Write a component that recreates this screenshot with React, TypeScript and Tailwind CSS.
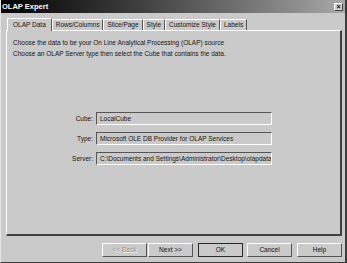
import React from 'react';

const tabs = ['OLAP Data', 'Rows/Columns', 'Slice/Page', 'Style', 'Customize Style', 'Labels'];

const fields = [
  { label: 'Cube:', value: 'LocalCube' },
  { label: 'Type:', value: 'Microsoft OLE DB Provider for OLAP Services' },
  { label: 'Server:', value: 'C:\\Documents and Settings\\Administrator\\Desktop\\olapdata' },
];

const Btn: React.FC<{ label: string; disabled?: boolean; primary?: boolean; className?: string }> = ({
  label,
  disabled,
  primary,
  className,
}) => (
  <div
    className={
      'h-[14px] w-[45px] flex items-center justify-center border ' +
      (primary ? 'border-[#2a2a2a] ' : 'border-t-white border-l-white border-r-[#555] border-b-[#555] ') +
      (className || '')
    }
  >
    <span className={disabled ? 'text-[#8e8e8e] [text-shadow:1px_1px_0_#fff]' : 'text-[#111]'}>{label}</span>
  </div>
);

const App: React.FC = () => {
  return (
    <div className="w-[347px] h-[263px] bg-[#cacaca] flex flex-col border-l border-l-[#e6e6e6] border-r-2 border-r-[#3a3a3a] border-b border-b-[#3a3a3a] font-['Liberation_Sans',Arial,sans-serif] text-[6.5px] text-[#151515] overflow-hidden">
      {/* title bar */}
      <div className="h-[13px] flex items-center justify-between bg-gradient-to-r from-[#050505] via-[#505050] to-[#a8a8a8] pl-[1px] pr-[2px]">
        <span className="text-white font-bold text-[7.5px] leading-none">OLAP Expert</span>
        <div className="w-[9px] h-[8px] bg-[#cfcfcf] border border-t-white border-l-white border-r-[#444] border-b-[#444] flex items-center justify-center text-[7px] font-bold leading-none text-black">
          ×
        </div>
      </div>

      <div className="flex flex-col pl-[5px] pr-[3px] pt-[4px]">
        {/* tabs */}
        <div className="flex items-end h-[13px] pl-[1px]">
          {tabs.map((t, i) => (
            <div
              key={t}
              className={
                'flex items-center border-t border-l border-t-white border-l-white border-r border-r-[#555] px-[3px] leading-none ' +
                (i === 0 ? 'h-[13px] -mb-[1px] bg-[#cacaca] relative z-10 px-[5px]' : 'h-[11px]')
              }
            >
              {t}
            </div>
          ))}
        </div>

        {/* panel */}
        <div className="h-[206px] border-t border-l border-t-white border-l-white border-r-2 border-r-[#404040] border-b-2 border-b-[#404040] flex flex-col pl-[6px] pt-[7px]">
          <p className="leading-[10.5px]">Choose the data to be your On Line Analytical Processing (OLAP) source</p>
          <p className="leading-[10.5px]">Choose an OLAP Server type then select the Cube that contains the data.</p>

          <div className="flex flex-col gap-[7px] mt-[53px]">
            {fields.map((f) => (
              <div key={f.label} className="flex items-center">
                <span className="w-[83px] text-right pr-[3px]">{f.label}</span>
                <div className="w-[176px] h-[13px] flex items-center pl-[3px] border border-t-[#555] border-l-[#555] border-b-white border-r-white whitespace-nowrap overflow-hidden">
                  {f.value}
                </div>
              </div>
            ))}
          </div>
        </div>
      </div>

      {/* buttons */}
      <div className="flex justify-end items-center pr-[3px] mt-[7px]">
        <Btn label="<< Back" disabled />
        <Btn label="Next >>" className="ml-[1px]" />
        <Btn label="OK" primary className="ml-[5px]" />
        <Btn label="Cancel" className="ml-[4px]" />
        <Btn label="Help" className="ml-[5px]" />
      </div>
    </div>
  );
};

export default App;
